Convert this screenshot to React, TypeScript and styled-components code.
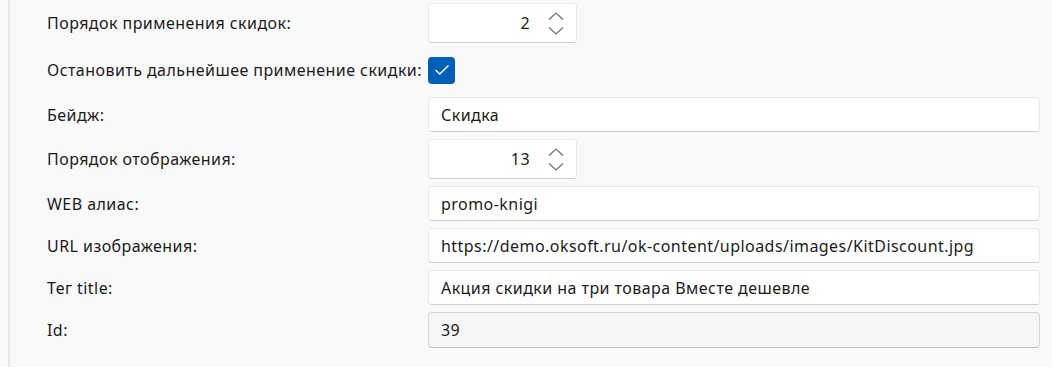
import React from "react";
import styled, { createGlobalStyle } from "styled-components";

const Global = createGlobalStyle`
  html, body { margin: 0; padding: 0; background: #f9f9f9; }
  body { font-family: "Noto Sans", "Open Sans", sans-serif; color: #1b1b1b; }
`;

const Panel = styled.div`
  margin-left: 8px;
  border-left: 2px solid #e7e7e7;
  height: 367px;
  box-sizing: border-box;
  padding: 3px 12px 0 37px;
  display: flex;
  flex-direction: column;
  gap: 7px;
`;

const Row = styled.div<{ $h: number }>`
  display: grid;
  grid-template-columns: 381px 1fr;
  align-items: center;
  height: ${(p) => p.$h}px;
`;

const Label = styled.div`
  font-size: 16px;
  letter-spacing: 0.45px;
  white-space: nowrap;
  color: #1b1b1b;
`;

const Field = styled.div<{ $readonly?: boolean }>`
  height: 100%;
  box-sizing: border-box;
  border: 1px solid ${(p) => (p.$readonly ? "#d6d6d6" : "#e9e9e9")};
  border-bottom-color: ${(p) => (p.$readonly ? "#c4c4c4" : "#cfcfcf")};
  border-radius: 4px;
  background: ${(p) => (p.$readonly ? "#f5f5f5" : "#ffffff")};
  display: flex;
  align-items: center;
  padding: 0 12px;
  font-size: 16px;
  letter-spacing: 0.45px;
  white-space: nowrap;
  color: #1b1b1b;
`;

const Spin = styled(Field)`
  width: 149px;
  justify-content: flex-end;
  padding: 0 12px 0 0;
`;

const SpinValue = styled.span`
  margin-right: 18px;
`;

const Arrows = styled.div`
  display: flex;
  flex-direction: column;
  gap: 7px;
  align-items: center;
`;

const CheckBox = styled.div`
  width: 27px;
  height: 27px;
  box-sizing: border-box;
  border-radius: 4px;
  background: #005fb8;
  display: flex;
  align-items: center;
  justify-content: center;
`;

const Chevron = ({ up }: { up?: boolean }) => (
  <svg width="16" height="8" viewBox="0 0 16 8">
    <path
      d={up ? "M1 7.5 L8 1 L15 7.5" : "M1 0.5 L8 7 L15 0.5"}
      fill="none"
      stroke="#6b6b6b"
      strokeWidth="1.1"
    />
  </svg>
);

const SpinBox = ({ value }: { value: string }) => (
  <Spin>
    <SpinValue>{value}</SpinValue>
    <Arrows>
      <Chevron up />
      <Chevron />
    </Arrows>
  </Spin>
);

export default function App() {
  return (
    <>
      <Global />
      <Panel>
        <Row $h={40}>
          <Label>Порядок применения скидок:</Label>
          <SpinBox value="2" />
        </Row>
        <Row $h={40}>
          <Label>Остановить дальнейшее применение скидки:</Label>
          <CheckBox>
            <svg width="16" height="12" viewBox="0 0 16 12">
              <path d="M1.5 6 L5.8 10 L14.5 1.5" fill="none" stroke="#fff" strokeWidth="1.5" />
            </svg>
          </CheckBox>
        </Row>
        <Row $h={35}>
          <Label>Бейдж:</Label>
          <Field>Скидка</Field>
        </Row>
        <Row $h={40}>
          <Label>Порядок отображения:</Label>
          <SpinBox value="13" />
        </Row>
        <Row $h={35}>
          <Label>WEB алиас:</Label>
          <Field>promo-knigi</Field>
        </Row>
        <Row $h={35}>
          <Label>URL изображения:</Label>
          <Field>https://demo.oksoft.ru/ok-content/uploads/images/KitDiscount.jpg</Field>
        </Row>
        <Row $h={35}>
          <Label>Тег title:</Label>
          <Field>Акция скидки на три товара Вместе дешевле</Field>
        </Row>
        <Row $h={36}>
          <Label>Id:</Label>
          <Field $readonly>39</Field>
        </Row>
      </Panel>
    </>
  );
}
